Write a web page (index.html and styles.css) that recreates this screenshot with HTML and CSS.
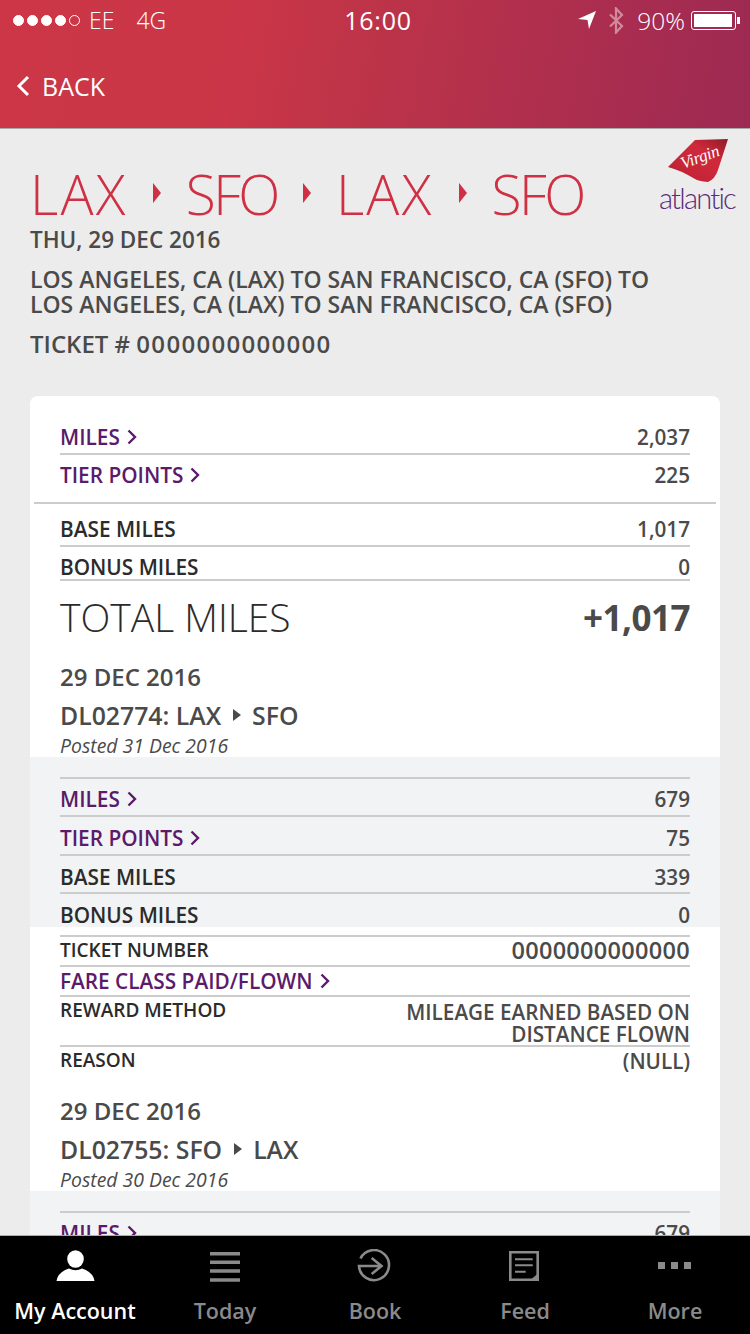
FILE: index.html
```html
<!DOCTYPE html>
<html lang="en">
<head>
<meta charset="utf-8">
<title>Virgin Atlantic - Flight detail</title>
<link rel="stylesheet" href="styles.css">
</head>
<body>
<div class="app">
  <header class="header">
    <div class="status">
      <div class="status-left">
        <span class="signal"><i></i><i></i><i></i><i></i><i class="off"></i></span>
        <span class="carrier">EE</span>
        <span class="net">4G</span>
      </div>
      <div class="clock">16:00</div>
      <div class="status-right">
        <svg class="loc" viewBox="0 0 18 18"><path d="M0 8 L18 0 L11 18 L9.500 9 Z" fill="#fff"/></svg>
        <svg class="bt" viewBox="0 0 16 27"><path d="M2 7.500 L14 19 L8 25.500 V1.500 L14 8 L2 19.500" fill="none" stroke="#fff" stroke-opacity=".45" stroke-width="2.200"/></svg>
        <span class="pct">90%</span>
        <span class="battery"><span class="battery-fill"></span></span><span class="battery-tip"></span>
      </div>
    </div>
    <div class="nav">
      <svg class="back-icon" viewBox="0 0 14 22"><path d="M12 2 L3 11 L12 20" fill="none" stroke="#fff" stroke-width="3"/></svg>
      <span class="back-label">BACK</span>
    </div>
  </header>

  <main class="main">
    <section class="summary">
      <svg class="logo-tail" viewBox="0 0 60 44">
        <defs><linearGradient id="tail" x1="1" y1="0" x2="0" y2="1"><stop offset="0" stop-color="#8f1a28"/><stop offset=".35" stop-color="#cf2a3c"/><stop offset=".7" stop-color="#c62537"/><stop offset="1" stop-color="#a81d2c"/></linearGradient></defs>
        <path d="M27 1 L60 0 L50 31 Q47 40 40 43 Q30 42 27 40 Q12 31 0 28 Z" fill="url(#tail)"/>
        <text class="logo-virgin" x="15" y="30" transform="rotate(-20 15 30)">Virgin</text>
      </svg>
      <div class="logo-word">atlantic</div>
      <h1 class="route">
        <span class="lax">LAX</span><i class="tri"></i><span class="sfo">SFO</span><i class="tri"></i><span class="lax">LAX</span><i class="tri"></i><span class="sfo">SFO</span>
      </h1>
      <p class="date">THU, 29 DEC 2016</p>
      <p class="desc">LOS ANGELES, CA (LAX) TO SAN FRANCISCO, CA (SFO) TO<br>LOS ANGELES, CA (LAX) TO SAN FRANCISCO, CA (SFO)</p>
      <p class="ticket">TICKET # <span class="ticket-digits">0000000000000</span></p>
    </section>

    <section class="card">
      <div class="block block-top">
        <div class="row h35 rule"><a class="label link">MILES<svg class="chev" viewBox="0 0 10 16"><path d="M1.500 1.500 L8 8 L1.500 14.500" fill="none" stroke="#5c1a6b" stroke-width="2.400"/></svg></a><span class="value">2,037</span></div>
        <div class="row h47 pb8"><a class="label link">TIER POINTS<svg class="chev" viewBox="0 0 10 16"><path d="M1.500 1.500 L8 8 L1.500 14.500" fill="none" stroke="#5c1a6b" stroke-width="2.400"/></svg></a><span class="value">225</span></div>
      </div>
      <div class="full-rule"></div>
      <div class="block">
        <div class="row h43 rule pt8"><span class="label">BASE MILES</span><span class="value">1,017</span></div>
        <div class="row h34 rule pt8"><span class="label">BONUS MILES</span><span class="value">0</span></div>
        <div class="total"><span class="total-label">TOTAL MILES</span><span class="total-value">+1,017</span></div>
        <div class="flight">
          <div class="flight-date">29 DEC 2016</div>
          <div class="flight-no">DL02774: LAX<i class="tri-s"></i>SFO</div>
          <div class="posted">Posted 31 Dec 2016</div>
        </div>
      </div>
      <div class="band">
        <div class="row h40 rule rule-top pt4"><a class="label link">MILES<svg class="chev" viewBox="0 0 10 16"><path d="M1.500 1.500 L8 8 L1.500 14.500" fill="none" stroke="#5c1a6b" stroke-width="2.400"/></svg></a><span class="value">679</span></div>
        <div class="row h39 rule pt4"><a class="label link">TIER POINTS<svg class="chev" viewBox="0 0 10 16"><path d="M1.500 1.500 L8 8 L1.500 14.500" fill="none" stroke="#5c1a6b" stroke-width="2.400"/></svg></a><span class="value">75</span></div>
        <div class="row h38 rule pt6"><span class="label">BASE MILES</span><span class="value">339</span></div>
        <div class="row h33 pt9"><span class="label">BONUS MILES</span><span class="value">0</span></div>
      </div>
      <div class="block">
        <div class="row h10 rule"></div>
        <div class="row h30 rule pb2"><span class="label small">TICKET NUMBER</span><span class="value digits">0000000000000</span></div>
        <div class="row h30 rule"><a class="label link">FARE CLASS PAID/FLOWN<svg class="chev" viewBox="0 0 10 16"><path d="M1.500 1.500 L8 8 L1.500 14.500" fill="none" stroke="#5c1a6b" stroke-width="2.400"/></svg></a></div>
        <div class="row h50 rule top"><span class="label small">REWARD METHOD</span><span class="value wrap">MILEAGE EARNED BASED ON<br>DISTANCE FLOWN</span></div>
        <div class="row h30 top"><span class="label small">REASON</span><span class="value null">(NULL)</span></div>
        <div class="flight flight-2">
          <div class="flight-date">29 DEC 2016</div>
          <div class="flight-no">DL02755: SFO<i class="tri-s"></i>LAX</div>
          <div class="posted">Posted 30 Dec 2016</div>
        </div>
      </div>
      <div class="band">
        <div class="row h40 rule rule-top pt4"><a class="label link">MILES<svg class="chev" viewBox="0 0 10 16"><path d="M1.500 1.500 L8 8 L1.500 14.500" fill="none" stroke="#5c1a6b" stroke-width="2.400"/></svg></a><span class="value">679</span></div>
      </div>
    </section>
  </main>

  <nav class="tabs">
    <div class="tab active">
      <svg class="tab-icon" viewBox="0 0 40 34"><ellipse cx="20.500" cy="10" rx="8.300" ry="8.800" fill="#fff"/><path d="M1.500 32 Q3 23 14 19.500 Q20.500 23 27 19.500 Q38 23 39.500 32 Z" fill="#fff"/></svg>
      <span>My Account</span>
    </div>
    <div class="tab">
      <svg class="tab-icon" viewBox="0 0 40 34"><path d="M5 4.700 H35 M5 13.300 H35 M5 22 H35 M5 31 H35" stroke="#8a8a8a" stroke-width="3.400"/></svg>
      <span>Today</span>
    </div>
    <div class="tab">
      <svg class="tab-icon" viewBox="0 0 40 34"><path d="M5.500 9.500 A15 15 0 1 1 4 17 H26.500 M16.700 9 L26.500 17 L16.700 25" fill="none" stroke="#8a8a8a" stroke-width="2.600"/></svg>
      <span>Book</span>
    </div>
    <div class="tab">
      <svg class="tab-icon" viewBox="0 0 40 34"><path d="M5.300 3.300 H32.700 V30.700 H5.300 Z" fill="none" stroke="#8a8a8a" stroke-width="2.600"/><path d="M10 10.300 H27.700 M10 16.300 H27.700 M10 22.700 H20.700" stroke="#8a8a8a" stroke-width="2"/><path d="M34 23.700 V32 H24 Z" fill="#8a8a8a"/></svg>
      <span>Feed</span>
    </div>
    <div class="tab">
      <svg class="tab-icon" viewBox="0 0 40 34"><path d="M3 13 H10 V20 H3 Z M16 13 H23 V20 H16 Z M29 13 H36 V20 H29 Z" fill="#8a8a8a"/></svg>
      <span>More</span>
    </div>
  </nav>
</div>
</body>
</html>
```
FILE: styles.css
```css
* { box-sizing: border-box; }
html, body { margin: 0; padding: 0; }
body { width: 750px; height: 1334px; overflow: hidden; font-family: "Open Sans", "Noto Sans", sans-serif; background: #ececec; }
p, h1 { margin: 0; font-weight: normal; }
a { text-decoration: none; }

.app { display: flex; flex-direction: column; width: 750px; height: 1334px; }

.header { flex: none; height: 129px; border-bottom: 1px solid #aaa; color: #fff;
  background: linear-gradient(100deg, #cc3647 0%, #cb3647 30%, #bb3349 52%, #aa2d4f 80%, #9c2a53 100%); }
.status { position: relative; display: flex; justify-content: space-between; align-items: center; height: 40px; padding: 0 10px 0 13px; font-size: 23px; font-weight: 300; }
.status-left { display: flex; align-items: center; }
.signal { display: flex; gap: 3px; margin-right: 9px; }
.signal i { width: 11px; height: 11px; border-radius: 50%; background: #fff; border: 1px solid #fff; }
.signal i.off { background: none; }
.carrier { margin-right: 22px; }
.clock { position: absolute; left: 6px; right: 0; text-align: center; font-weight: 500; font-size: 25px; letter-spacing: .8px; }
.status-right { position: relative; display: flex; align-items: center; }
.loc { width: 18px; height: 18px; margin-right: 12px; }
.bt { width: 16px; height: 27px; margin-right: 13px; }
.pct { margin-right: 6px; font-size: 24.500px; }
.battery { display: block; width: 45px; height: 19px; padding: 2px; border: 1px solid #fff; border-radius: 3px; }
.battery-fill { display: block; width: 38px; height: 13px; background: #fff; }
.battery-tip { display: block; width: 3px; height: 7px; background: #fff; margin-left: 1px; }

.nav { display: flex; align-items: center; height: 88px; padding: 4px 0 0 16px; }
.back-icon { width: 14px; height: 22px; margin-right: 12px; }
.back-label { font-size: 25px; font-weight: 400; }

.main { flex: 1; min-height: 0; overflow: hidden; }

.summary { position: relative; height: 267px; padding: 32px 30px 0; color: #4a4a4a; }
.logo-tail { position: absolute; left: 668px; top: 10px; width: 60px; height: 44px; }
.logo-virgin { fill: #fff; font-family: "Liberation Serif", serif; font-style: italic; font-size: 17px; letter-spacing: -.3px; }
.logo-word { position: absolute; left: 654px; top: 54px; width: 86px; text-align: center; font-family: Lato, sans-serif; font-weight: 300; font-size: 29px; line-height: 30px; letter-spacing: -1.750px; color: #5b2a7a; }
.route { display: flex; align-items: center; gap: 25px; height: 64px; font-size: 55px; line-height: 63px; font-weight: 300; color: #cf3044; }
.route span { display: block; }
.lax { letter-spacing: 2.300px; }
.sfo { letter-spacing: -2.500px; }
.tri { display: block; width: 0; height: 0; border-left: 8px solid #cf3044; border-top: 10px solid transparent; border-bottom: 10px solid transparent; margin-top: -1px; }
.date { font-size: 22.500px; line-height: 30px; font-weight: 600; }
.desc { margin-top: 12px; font-size: 23px; line-height: 25px; font-weight: 600; }
.ticket { margin-top: 12px; font-size: 24px; line-height: 30px; font-weight: 600; }
.ticket-digits { letter-spacing: 1.300px; }

.card { width: 690px; margin: 0 30px; background: #fff; border-radius: 8px 8px 0 0; padding-top: 24px; }
.block { padding: 0 30px; }
.full-rule { height: 2px; margin: 0 4px; background: #ccc; }
.band { padding: 20px 30px 0; background: #f2f3f5; }

.row { display: flex; justify-content: space-between; align-items: center; }
.rule { border-bottom: 2px solid #ccc; }
.rule-top { border-top: 2px solid #ccc; }
.top { align-items: flex-start; }
.h10 { height: 10px; }
.h30 { height: 30px; }
.h33 { height: 33px; }
.h34 { height: 34px; }
.h35 { height: 35px; }
.h38 { height: 38px; }
.h39 { height: 39px; }
.h40 { height: 40px; }
.h43 { height: 43px; }
.h47 { height: 47px; }
.h50 { height: 50px; }
.pt4 { padding-top: 4px; }
.pt6 { padding-top: 6px; }
.pt8 { padding-top: 8px; }
.pt9 { padding-top: 9px; }
.pb2 { padding-bottom: 2px; }
.pb8 { padding-bottom: 8px; }

.label { font-size: 20.800px; line-height: 28px; font-weight: 600; color: #2b2b2b; }
.small { font-size: 19px; line-height: 26px; }
.link { display: flex; align-items: center; color: #5c1a6b; }
.chev { width: 10px; height: 16px; margin-left: 7px; }
.value { font-size: 20.700px; line-height: 22px; font-weight: 600; color: #4a4a4a; text-align: right; }
.digits { font-size: 23.500px; letter-spacing: .3px; }
.wrap { margin-top: 4px; }
.null { margin-top: 3px; }

.total { display: flex; justify-content: space-between; align-items: center; height: 70px; color: #2b2b2b; }
.total-label { font-size: 39px; font-weight: 300; }
.total-value { margin-top: 2px; font-size: 35px; font-weight: 700; color: #4a4a4a; letter-spacing: -.5px; }

.flight { color: #4a4a4a; padding-top: 7px; height: 106px; }
.flight-2 { padding-top: 15px; height: 114px; }
.flight-date { font-size: 24px; line-height: 38px; font-weight: 600; }
.flight-no { display: flex; align-items: center; font-size: 24.800px; line-height: 38px; font-weight: 600; }
.tri-s { display: block; width: 0; height: 0; margin: 0 11px 0 12px; border-left: 8px solid #4a4a4a; border-top: 6px solid transparent; border-bottom: 6px solid transparent; }
.posted { font-size: 19.400px; line-height: 24px; font-style: italic; }

.tabs { flex: none; display: grid; grid-template-columns: repeat(5, 150px); height: 99px; background: #000; border-top: 1px solid #aaa; }
.tab { display: flex; flex-direction: column; align-items: center; padding-top: 13px; color: #8a8a8a; font-size: 21.500px; font-weight: 600; line-height: 28px; }
.tab.active { color: #fff; }
.tab-icon { width: 40px; height: 34px; margin-bottom: 14px; }
```
